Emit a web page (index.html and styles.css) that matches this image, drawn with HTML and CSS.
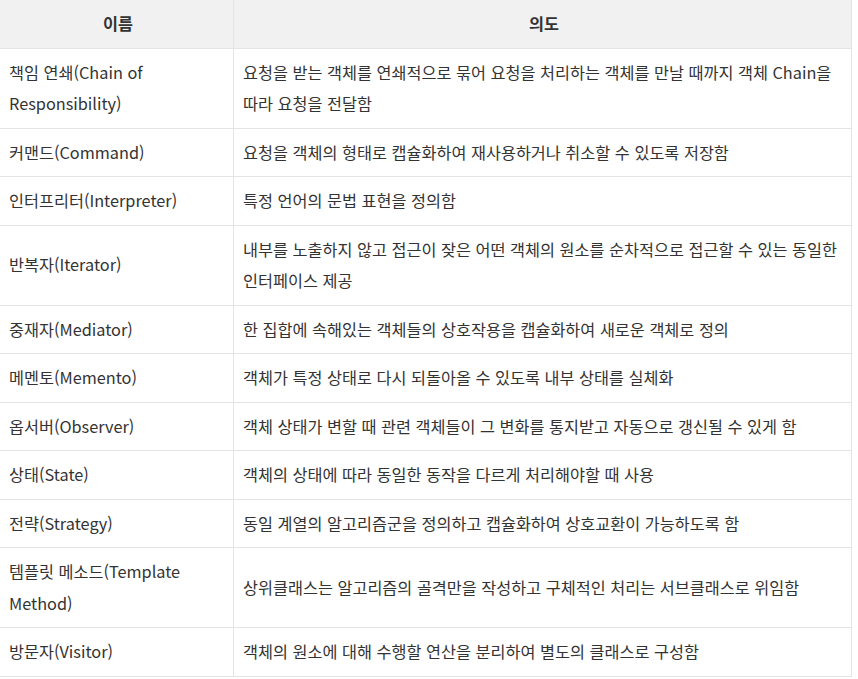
FILE: index.html
```html
<!DOCTYPE html>
<html lang="ko">
<head>
<meta charset="utf-8">
<link rel="stylesheet" href="styles.css">
</head>
<body>
<table class="pattern-table">
  <thead>
    <tr><th class="col-name">이름</th><th class="col-intent">의도</th></tr>
  </thead>
  <tbody>
    <tr><td>책임 연쇄(Chain of Responsibility)</td><td>요청을 받는 객체를 연쇄적으로 묶어 요청을 처리하는 객체를 만날 때까지 객체 Chain을 따라 요청을 전달함</td></tr>
    <tr><td>커맨드(Command)</td><td>요청을 객체의 형태로 캡슐화하여 재사용하거나 취소할 수 있도록 저장함</td></tr>
    <tr><td>인터프리터(Interpreter)</td><td>특정 언어의 문법 표현을 정의함</td></tr>
    <tr><td>반복자(Iterator)</td><td>내부를 노출하지 않고 접근이 잦은 어떤 객체의 원소를 순차적으로 접근할 수 있는 동일한 인터페이스 제공</td></tr>
    <tr><td>중재자(Mediator)</td><td>한 집합에 속해있는 객체들의 상호작용을 캡슐화하여 새로운 객체로 정의</td></tr>
    <tr><td>메멘토(Memento)</td><td>객체가 특정 상태로 다시 되돌아올 수 있도록 내부 상태를 실체화</td></tr>
    <tr><td>옵서버(Observer)</td><td>객체 상태가 변할 때 관련 객체들이 그 변화를 통지받고 자동으로 갱신될 수 있게 함</td></tr>
    <tr><td>상태(State)</td><td>객체의 상태에 따라 동일한 동작을 다르게 처리해야할 때 사용</td></tr>
    <tr><td>전략(Strategy)</td><td>동일 계열의 알고리즘군을 정의하고 캡슐화하여 상호교환이 가능하도록 함</td></tr>
    <tr><td>템플릿 메소드(Template Method)</td><td>상위클래스는 알고리즘의 골격만을 작성하고 구체적인 처리는 서브클래스로 위임함</td></tr>
    <tr><td>방문자(Visitor)</td><td>객체의 원소에 대해 수행할 연산을 분리하여 별도의 클래스로 구성함</td></tr>
  </tbody>
</table>
</body>
</html>
```

FILE: styles.css
```css
html, body {
  margin: 0;
  padding: 0;
  background: #ffffff;
}

.pattern-table {
  border-collapse: collapse;
  width: 853px;
  table-layout: fixed;
  font-family: "Noto Sans CJK KR", "Noto Sans", sans-serif;
  font-size: 16.3px;
  line-height: 31.5px;
  color: #333333;
  margin-left: -1px;
}

.pattern-table th,
.pattern-table td {
  border: 1px solid #e4e4e4;
  padding: 8px 6px 8px 9px;
  text-align: left;
  vertical-align: middle;
  font-weight: normal;
}

.pattern-table th {
  background: #f1f1f1;
  text-align: center;
  font-weight: bold;
  height: 31px;
  border-top: none;
}

.col-name {
  width: 218px;
}
```
